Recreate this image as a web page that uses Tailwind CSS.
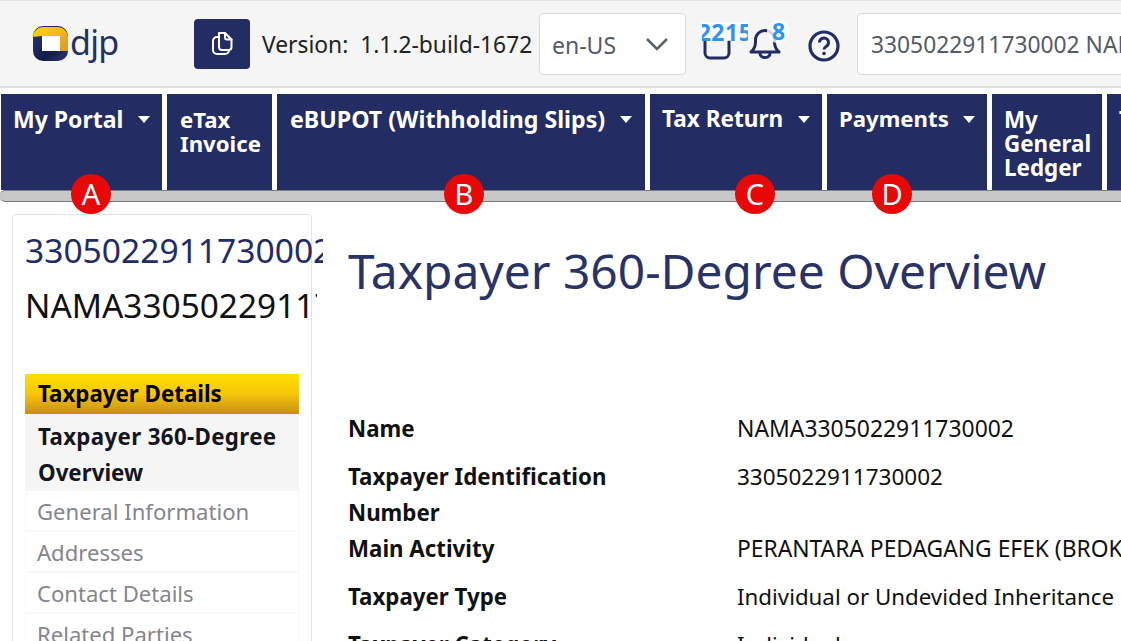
<!doctype html>
<html>
<head>
<meta charset="utf-8">
<script src="https://cdn.jsdelivr.net/npm/@tailwindcss/browser@4"></script>
</head>
<body class="relative bg-white overflow-hidden w-[1121px] h-[641px] font-['Noto_Sans','Open_Sans',sans-serif] text-[#111]">
  <!-- top bar -->
  <header class="h-[88px] bg-[#f5f5f6] border-t border-b-2 border-t-[#e4e4e4] border-b-[#dedede] flex items-center overflow-hidden whitespace-nowrap">
    <div class="w-[194px] shrink-0 flex items-center pl-[33px] pt-[1px]">
      <svg width="36" height="36" viewBox="0 0 36 36" class="shrink-0">
        <defs>
          <linearGradient id="logoYellow" x1="0" y1="0" x2="1" y2="0.6"><stop offset="0" stop-color="#fdd20e"/><stop offset="0.7" stop-color="#f3b61c"/><stop offset="1" stop-color="#e0a020"/></linearGradient>
          <linearGradient id="logoNavy" x1="0" y1="0" x2="1" y2="1"><stop offset="0" stop-color="#2a3a7c"/><stop offset="0.6" stop-color="#141c48"/><stop offset="1" stop-color="#2a3670"/></linearGradient>
        </defs>
        <rect x="0" y="0" width="35" height="35" rx="10" fill="url(#logoNavy)"/>
        <path d="M0 11a10 10 0 0 1 10-10h15a10 10 0 0 1 10 10v14h-8V10H9z" fill="url(#logoYellow)"/>
        <rect x="9" y="10" width="18" height="15" fill="#fff"/>
      </svg>
      <span class="text-[34px] leading-none text-[#25305f] ml-[1px] -mt-1 tracking-[-0.7px]">djp</span>
    </div>
    <button class="w-[56px] h-[50px] rounded-[4px] bg-[#232c63] flex items-center justify-center shrink-0">
      <svg width="21" height="25" viewBox="0 0 21 25" fill="none" stroke="#fff" stroke-width="2" stroke-linejoin="round" stroke-linecap="round">
        <path d="M7 2h6l6.500 6.500V16a3 3 0 0 1-3 3H10a3 3 0 0 1-3-3z"/>
        <path d="M13 2v4.500a2 2 0 0 0 2 2h4.500"/>
        <path d="M7 6H5a4 4 0 0 0-4 4v9a4 4 0 0 0 4 4h8a4 4 0 0 0 4-4"/>
      </svg>
    </button>
    <span class="ml-[12px] w-[277px] shrink-0 pt-[3px] text-[22.800px] whitespace-pre text-[#222]">Version:  1.1.2-build-1672</span>
    <div class="w-[147px] h-[62px] shrink-0 bg-white border border-[#d9d9d9] rounded-[4px] flex items-center justify-between pl-[12px] pr-[17px] text-[23px] text-[#555b66]">
      <span class="pt-[3px]">en-US</span>
      <svg width="22" height="14" viewBox="0 0 22 14" fill="none" stroke="#59606c" stroke-width="2.500"><path d="M1 2l10 10L21 2"/></svg>
    </div>
    <div class="relative ml-[16px] w-[46px] h-[50px] shrink-0">
      <svg width="28" height="20" viewBox="0 0 28 20" fill="none" stroke="#232c63" stroke-width="3" class="absolute left-[1px] top-[21px]"><path d="M2 0v13a5 5 0 0 0 5 5h14a5 5 0 0 0 5-5V0"/></svg>
      <div class="absolute left-0 top-[3px] w-[46px] h-[19px] overflow-hidden bg-white/70 flex justify-center text-[23px] leading-[20px] font-bold text-[#2f93f2]"><span class="shrink-0 tracking-[0.5px]">2215</span></div>
    </div>
    <div class="relative ml-[2px] w-[30px] h-[50px] shrink-0">
      <svg width="32" height="30" viewBox="0 0 32 30" fill="none" stroke="#232c63" stroke-width="3" stroke-linecap="round" stroke-linejoin="round" class="absolute left-[-1px] top-[10px]"><path d="M2 23c3-2.500 4.500-6 4.500-10V11a9.500 9.500 0 0 1 19 0v2c0 4 1.500 7.500 4.500 10z"/><path d="M11 24.500a5 4 0 0 0 10 0"/></svg>
      <span class="absolute left-[17px] top-[1px] w-[23px] h-[23px] bg-white/80 rounded-full text-[23px] leading-[22px] font-bold text-[#2f93f2] text-center">8</span>
    </div>
    <svg width="32" height="32" viewBox="0 0 32 32" fill="none" class="ml-[28px] mt-[4px] shrink-0"><circle cx="16" cy="16" r="14" stroke="#232c63" stroke-width="3.200"/><path d="M11.500 12.500a4.500 4.500 0 1 1 7 3.700c-1.700 1.100-2.500 2-2.500 3.300" stroke="#232c63" stroke-width="3"/><circle cx="16" cy="23.500" r="1.800" fill="#232c63"/></svg>
    <div class="ml-[17px] w-[400px] h-[62px] shrink-0 bg-white border border-[#d9d9d9] rounded-[4px] flex items-center pl-[13px] text-[22.800px] text-[#555b66]"><span class="pt-[3px]">3305022911730002 NAMA3305022911730002</span></div>
  </header>

  <!-- main menu -->
  <nav class="mt-[6px] h-[108px] overflow-hidden">
    <div class="flex gap-[5px] h-[96px] pl-[1px] text-[#fff] text-[23px] leading-[24px] font-bold">
      <a class="w-[161px] shrink-0 bg-[#232c63] px-[12px] pt-[13px] flex justify-between"><span>My Portal</span><i class="mt-[9px] border-x-[6px] border-t-[7px] border-x-transparent border-t-white h-0"></i></a>
      <a class="w-[105px] shrink-0 bg-[#232c63] pl-[13px] pt-[14px] text-[22.200px]">eTax<br>Invoice</a>
      <a class="w-[368px] shrink-0 bg-[#232c63] pl-[13px] pr-[13px] pt-[13px] flex justify-between"><span class="text-[23.200px]">eBUPOT (Withholding Slips)</span><i class="mt-[9px] border-x-[6px] border-t-[7px] border-x-transparent border-t-white h-0"></i></a>
      <a class="w-[172px] shrink-0 bg-[#232c63] px-[12px] pt-[13px] flex justify-between"><span class="text-[22.600px]">Tax Return</span><i class="mt-[9px] border-x-[6px] border-t-[7px] border-x-transparent border-t-white h-0"></i></a>
      <a class="w-[160px] shrink-0 bg-[#232c63] px-[12px] pt-[13px] flex justify-between"><span class="text-[22.200px]">Payments</span><i class="mt-[9px] border-x-[6px] border-t-[7px] border-x-transparent border-t-white h-0"></i></a>
      <a class="w-[110px] shrink-0 bg-[#232c63] pl-[12px] pt-[14px] text-[22.400px]">My<br>General<br>Ledger</a>
      <a class="w-[120px] shrink-0 bg-[#232c63] pl-[12px] pt-[13px]">Tax</a>
    </div>
    <div class="h-[12px] bg-[#c8c8c8] border-y border-y-[#7d7d7d] rounded-l-[5px]"></div>
  </nav>
  <span class="absolute left-[71px] top-[174px] w-[40px] h-[40px] rounded-full bg-[#e80808] text-white text-[29px] leading-[40px] text-center">A</span>
  <span class="absolute left-[444px] top-[174px] w-[40px] h-[40px] rounded-full bg-[#e80808] text-white text-[29px] leading-[40px] text-center">B</span>
  <span class="absolute left-[735px] top-[174px] w-[40px] h-[40px] rounded-full bg-[#e80808] text-white text-[29px] leading-[40px] text-center">C</span>
  <span class="absolute left-[872px] top-[174px] w-[40px] h-[40px] rounded-full bg-[#e80808] text-white text-[29px] leading-[40px] text-center">D</span>

  <div class="flex items-start mt-[12px] pl-[12px]">
    <!-- side panel -->
    <aside class="w-[300px] h-[500px] shrink-0 border border-[#e2e2e2] rounded-[4px] pl-[12px]">
      <div class="h-[72px] pt-[15px] w-[298px] overflow-hidden whitespace-nowrap text-[33.600px] leading-[40px] text-[#232c63]">3305022911730002</div>
      <div class="h-[89px] w-[292px] -mt-[2px] overflow-hidden whitespace-nowrap text-[33.400px] leading-[40px]">NAMA3305022911730002</div>
      <div class="w-[274px]">
        <div class="h-[40px] pl-[13px] text-[22.300px] font-bold leading-[40px] bg-gradient-to-b from-[#ffdf00] via-[#f6c60a] to-[#c88e14] text-black">Taxpayer Details</div>
        <div class="h-[77px] pl-[13px] pt-[5px] text-[22.300px] font-bold leading-[36px] bg-[#f5f5f6] text-[#151520]"><span class="tracking-[0.35px]">Taxpayer 360-Degree</span> Overview</div>
        <div class="h-[41px] pl-[11px] text-[22.100px] leading-[41px] text-[#85858d] border-b-2 border-x border-[#f8f8f9]">General Information</div>
        <div class="h-[41px] pl-[11px] text-[22.100px] leading-[41px] text-[#85858d] border-b-2 border-x border-[#f8f8f9]">Addresses</div>
        <div class="h-[41px] pl-[11px] text-[22.100px] leading-[41px] text-[#85858d] border-b-2 border-x border-[#f8f8f9]">Contact Details</div>
        <div class="h-[41px] pl-[11px] text-[22.100px] leading-[41px] text-[#85858d] border-b-2 border-x border-[#f8f8f9]">Related Parties</div>
      </div>
    </aside>

    <!-- content -->
    <main class="ml-[36px] flex-1 min-w-0 whitespace-nowrap">
      <h1 class="text-[47.900px] leading-[60px] mt-[27px] text-[#2a3266]">Taxpayer 360-Degree Overview</h1>
      <dl class="mt-[110px] grid grid-cols-[389px_1fr] text-[22.300px] leading-[36px]">
        <dt class="font-bold h-[48px]">Name</dt><dd class="text-[22.900px]">NAMA3305022911730002</dd>
        <dt class="font-bold whitespace-normal w-[300px]">Taxpayer Identification Number</dt><dd class="text-[22.500px]">3305022911730002</dd>
        <dt class="font-bold h-[48px]">Main Activity</dt><dd class="text-[22.800px]">PERANTARA PEDAGANG EFEK (BROKER)</dd>
        <dt class="font-bold h-[48px]">Taxpayer Type</dt><dd>Individual or Undevided Inheritance</dd>
        <dt class="font-bold">Taxpayer Category</dt><dd>Individual</dd>
      </dl>
    </main>
  </div>
</body>
</html>
